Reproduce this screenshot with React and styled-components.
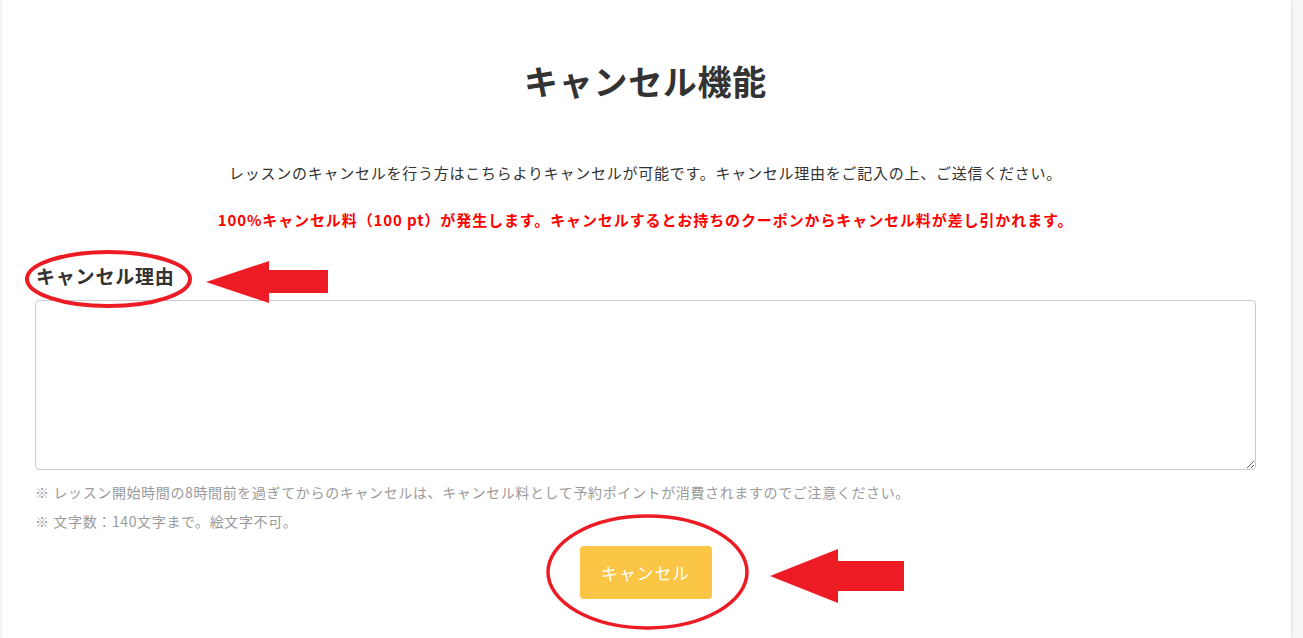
import React from "react";
import styled, { createGlobalStyle } from "styled-components";

const Global = createGlobalStyle`
  html, body { margin: 0; padding: 0; }
  body {
    background: #f6f6f6;
    font-family: "Noto Sans CJK JP", "Noto Sans", sans-serif;
    color: #333;
    letter-spacing: 0.05em;
  }
`;

const Page = styled.div`
  position: relative;
  min-height: 638px;
`;

const Panel = styled.main`
  margin-left: 2px;
  width: 1289px;
  min-height: 638px;
  background: #fff;
  box-shadow: 1px 0 3px rgba(0, 0, 0, 0.08);
  padding: 0 35px 0 33px;
  box-sizing: border-box;
  display: flex;
  flex-direction: column;
`;

const Title = styled.h1`
  margin: 55px 0 0;
  font-size: 34px;
  line-height: 51px;
  font-weight: 700;
  text-align: center;
  letter-spacing: 0.02em;
  color: #333;
`;

const Lead = styled.p`
  margin: ${(p) => p.$mt}px 0 0;
  font-size: 15px;
  line-height: 24px;
  text-align: center;
  font-weight: ${(p) => (p.$warn ? 700 : 400)};
  letter-spacing: ${(p) => (p.$warn ? "0.06em" : "0.05em")};
  color: ${(p) => (p.$warn ? "#ff0000" : "#333")};
`;

const Label = styled.label`
  margin: 30px 0 0 1px;
  font-size: 19px;
  line-height: 28px;
  font-weight: 700;
  color: #333;
`;

const Area = styled.textarea`
  margin-top: 10px;
  height: 170px;
  width: 100%;
  box-sizing: border-box;
  border: 1px solid #cccccc;
  border-radius: 4px;
  padding: 8px;
  font: inherit;
  resize: vertical;
  outline: none;
`;

const Note = styled.p`
  margin: ${(p) => p.$mt}px 0 0;
  font-size: 14px;
  line-height: 29px;
  letter-spacing: 0.045em;
  color: #9a9a9a;
`;

const ButtonRow = styled.div`
  display: flex;
  justify-content: center;
  margin-top: 10px;
`;

const Button = styled.button`
  width: 132px;
  height: 53px;
  border: none;
  border-radius: 4px;
  background: #fbc546;
  color: #fff;
  font-family: inherit;
  font-size: 17px;
  letter-spacing: 0.05em;
  cursor: pointer;
`;

const Overlay = styled.svg`
  position: absolute;
  left: 0;
  top: 0;
  pointer-events: none;
`;

export default function App() {
  return (
    <Page>
      <Global />
      <Panel>
        <Title>キャンセル機能</Title>
        <Lead $mt={55}>
          レッスンのキャンセルを行う方はこちらよりキャンセルが可能です。キャンセル理由をご記入の上、ご送信ください。
        </Lead>
        <Lead $mt={23} $warn>
          100%キャンセル料（100 pt）が発生します。キャンセルするとお持ちのクーポンからキャンセル料が差し引かれます。
        </Lead>
        <Label htmlFor="reason">キャンセル理由</Label>
        <Area id="reason" />
        <Note $mt={8}>
          ※ レッスン開始時間の8時間前を過ぎてからのキャンセルは、キャンセル料として予約ポイントが消費されますのでご注意ください。
        </Note>
        <Note $mt={0}>※ 文字数：140文字まで。絵文字不可。</Note>
        <ButtonRow>
          <Button type="button">キャンセル</Button>
        </ButtonRow>
      </Panel>
      <Overlay width="1303" height="638" viewBox="0 0 1303 638">
        <ellipse cx="108.5" cy="279" rx="81.5" ry="27" fill="none" stroke="#ed1c24" strokeWidth="4" />
        <polygon points="206,282 269,261 269,270 328,270 328,293 269,293 269,303" fill="#ed1c24" />
        <ellipse cx="647.5" cy="572" rx="99.5" ry="56" fill="none" stroke="#ed1c24" strokeWidth="3.5" />
        <polygon points="770,576 838,549 838,561 904,561 904,591 838,591 838,603" fill="#ed1c24" />
      </Overlay>
    </Page>
  );
}
